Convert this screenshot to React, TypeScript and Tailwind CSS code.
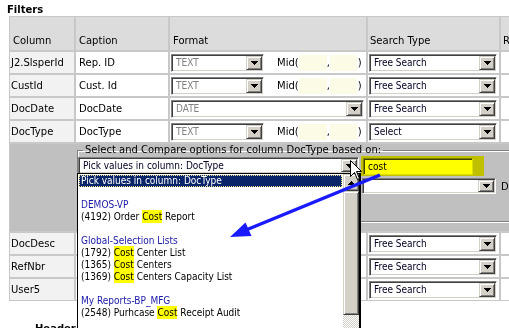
import React from 'react'

const V = "font-['DejaVu_Sans',Verdana,sans-serif] text-[10px]"
const T = "font-['DejaVu_Sans_Condensed','Liberation_Sans',Tahoma,sans-serif] text-[10px]"

type Row = { col: string; cap: string; fmt: string; mid: boolean; search: string }

const topRows: Row[] = [
    { col: 'J2.SlsperId', cap: 'Rep. ID', fmt: 'TEXT', mid: true, search: 'Free Search' },
    { col: 'CustId', cap: 'Cust. Id', fmt: 'TEXT', mid: true, search: 'Free Search' },
    { col: 'DocDate', cap: 'DocDate', fmt: 'DATE', mid: false, search: 'Free Search' },
    { col: 'DocType', cap: 'DocType', fmt: 'TEXT', mid: true, search: 'Select' },
]

const bottomRows: Row[] = [
    { col: 'DocDesc', cap: 'DocDesc', fmt: 'TEXT', mid: true, search: 'Free Search' },
    { col: 'RefNbr', cap: 'RefNbr', fmt: 'TEXT', mid: true, search: 'Free Search' },
    { col: 'User5', cap: 'User5', fmt: 'TEXT', mid: true, search: 'Free Search' },
]

type Item = { text?: string; selected?: boolean; group?: boolean; pre?: string; hl?: string; post?: string }

const items: Item[] = [
    { text: 'Pick values in column: DocType', selected: true },
    { text: '' },
    { text: 'DEMOS-VP', group: true },
    { pre: '(4192) Order ', hl: 'Cost', post: ' Report' },
    { text: '' },
    { text: 'Global-Selection Lists', group: true },
    { pre: '(1792) ', hl: 'Cost', post: ' Center List' },
    { pre: '(1365) ', hl: 'Cost', post: ' Centers' },
    { pre: '(1369) ', hl: 'Cost', post: ' Centers Capacity List' },
    { text: '' },
    { text: 'My Reports-BP_MFG', group: true },
    { pre: '(2548) Purhcase ', hl: 'Cost', post: ' Receipt Audit' },
    { text: '' },
]

function DownArrow() {
    return (
        <svg width="7" height="4" viewBox="0 0 7 4" shapeRendering="crispEdges">
            <path d="M0 0h7v1h-1v1h-1v1h-1v1h-1v-1h-1v-1h-1v-1h-1z" fill="#000" />
        </svg>
    )
}

function UpArrow() {
    return (
        <svg width="7" height="4" viewBox="0 0 7 4" shapeRendering="crispEdges">
            <path d="M3 0h1v1h1v1h1v1h1v1h-7v-1h1v-1h1v-1h1z" fill="#000" />
        </svg>
    )
}

function DropButton() {
    return (
        <div className="w-[16px] h-full shrink-0 bg-[#d4d0c8] border border-t-[#d4d0c8] border-l-[#d4d0c8] border-r-[#404040] border-b-[#404040] shadow-[inset_1px_1px_0_#fff,inset_-1px_-1px_0_#808080] flex items-center justify-center">
            <DownArrow />
        </div>
    )
}

function Select({ value = '', className = '', muted = false }: { value?: string; className?: string; muted?: boolean }) {
    return (
        <div className={`flex shrink-0 bg-white border border-t-[#808080] border-l-[#808080] border-r-white border-b-white shadow-[inset_1px_1px_0_#404040,inset_-1px_-1px_0_#d4d0c8] p-px ${className}`}>
            <div className={`flex-1 flex items-center pl-[3px] ${T} ${muted ? 'text-[#808080]' : 'text-[#000022]'}`}>{value}</div>
            <DropButton />
        </div>
    )
}

function MidBox({ className = '' }: { className?: string }) {
    return <div className={`h-[16px] bg-[#fbfbe6] ${className}`} />
}

function TableRow({ row }: { row: Row }) {
    return (
        <>
            <div className="h-[21px] bg-[#f2f2f2] px-px flex items-center">{row.col}</div>
            <div className="h-[21px] bg-white px-[3px] flex items-center">{row.cap}</div>
            <div className="h-[21px] bg-white pl-px flex items-center">
                <Select value={row.fmt} muted className={row.mid ? 'w-[93px] h-[18px]' : 'w-[193px] h-[18px]'} />
                {row.mid && (
                    <div className="flex items-center ml-[13px]">
                        <span>Mid(</span>
                        <MidBox className="w-[28px]" />
                        <span className="w-[3px]">,</span>
                        <MidBox className="w-[27px]" />
                        <span className="ml-px">)</span>
                    </div>
                )}
            </div>
            <div className="h-[21px] bg-white pl-px flex items-center">
                <Select value={row.search} className="w-[128px] h-[18px]" />
            </div>
            <div className="h-[21px] bg-white" />
        </>
    )
}

function PickList() {
    return (
        <div className="absolute left-[-1px] top-[16px] w-[284px] h-[170px] bg-white border border-black border-r-2 flex z-10">
            <div className={`flex-1 pt-px ${T}`}>
                {items.map((it, i) => {
                    if (it.selected) {
                        return (
                            <div key={i} className="mx-px h-[12px] leading-[12px] pl-[2px] bg-[#0a246a] text-white outline-1 outline-dotted outline-[#f0e68c] -outline-offset-1">
                                {it.text}
                            </div>
                        )
                    }
                    if (it.hl) {
                        return (
                            <div key={i} className="h-[12px] leading-[12px] pl-[3px] text-black whitespace-nowrap">
                                {it.pre}
                                <span className="bg-[#ffff00] py-px">{it.hl}</span>
                                {it.post}
                            </div>
                        )
                    }
                    return (
                        <div key={i} className={`h-[12px] leading-[12px] pl-[3px] whitespace-nowrap ${it.group ? 'text-[#1818a8]' : 'text-black'}`}>
                            {it.text}
                        </div>
                    )
                })}
            </div>
            <div className="w-[16px] flex flex-col">
                <div className="h-[17px] shrink-0 bg-[#d4d0c8] border border-t-[#d4d0c8] border-l-[#d4d0c8] border-r-[#404040] border-b-[#404040] shadow-[inset_1px_1px_0_#fff,inset_-1px_-1px_0_#808080] flex items-center justify-center">
                    <UpArrow />
                </div>
                <div className="h-[124px] shrink-0 bg-[#d4d0c8] border border-t-[#d4d0c8] border-l-[#d4d0c8] border-r-[#404040] border-b-[#404040] shadow-[inset_1px_1px_0_#fff,inset_-1px_-1px_0_#808080]" />
                <div className="flex-1 bg-[repeating-conic-gradient(#d4d0c8_0_25%,#ffffff_0_50%)] bg-[length:2px_2px]" />
            </div>
        </div>
    )
}

export default function App() {
    return (
        <div className={`relative w-[509px] h-[328px] overflow-hidden bg-white text-black pt-[4px] pl-[7px] ${V}`}>
            <div className="font-bold leading-[12px]">Filters</div>

            <div className="ml-[2px] w-max grid grid-cols-[64px_92px_196px_131px_40px] gap-[2px] bg-[#c8c8c8] p-px">
                <div className="h-[33px] bg-[#dcdcdc] px-[3px] pb-[2px] flex items-end">Column</div>
                <div className="h-[33px] bg-[#dcdcdc] px-[3px] pb-[2px] flex items-end">Caption</div>
                <div className="h-[33px] bg-[#dcdcdc] px-[3px] pb-[2px] flex items-end">Format</div>
                <div className="h-[33px] bg-[#dcdcdc] px-[2px] pb-[2px] flex items-end">Search Type</div>
                <div className="h-[33px] bg-[#dcdcdc] px-[2px] pb-[2px] flex items-end">R</div>

                {topRows.map((r) => (
                    <TableRow key={r.col} row={r} />
                ))}

                <div className="col-span-5 h-[87px] bg-[#c0c0c0] pl-[67px]">
                    <fieldset className="w-[460px] border border-[#808080] shadow-[1px_1px_0_#fff,inset_1px_1px_0_#fff] pb-[27px]">
                        <legend className="ml-[5px] px-[2px] leading-[12px]">Select and Compare options for column DocType based on:</legend>
                        <div className="flex items-start mt-px">
                            <div className="relative">
                                <Select value="Pick values in column: DocType" className="w-[281px] h-[17px]" />
                                <PickList />
                            </div>
                            <div className={`ml-[4px] mt-px w-[110px] h-[17px] bg-[#ffff00] border border-t-[#808080] border-l-[#808080] border-r-[#e0e0e0] border-b-[#e0e0e0] shadow-[inset_1px_1px_0_#404040] pl-[4px] flex items-center ${T}`}>
                                cost
                            </div>
                        </div>
                        <div className="flex items-center mt-[3px] pl-[284px]">
                            <Select className="w-[134px] h-[16px]" />
                            <span className="ml-[5px]">Default</span>
                        </div>
                    </fieldset>
                </div>

                {bottomRows.map((r) => (
                    <TableRow key={r.col} row={r} />
                ))}
            </div>

            <div className="mt-[22px] pl-[28px] font-bold leading-[12px]">Header Links</div>

            {/* yellow marker over the search box */}
            <div className="absolute left-[361px] top-[156px] w-[123px] h-[20px] bg-[#ffff00] mix-blend-multiply z-20 pointer-events-none" />

            {/* annotation arrow */}
            <svg className="absolute left-0 top-0 z-30 pointer-events-none" width="509" height="328" viewBox="0 0 509 328">
                <line x1="380" y1="175" x2="246" y2="230" stroke="#1a1aff" strokeWidth="3.5" />
                <polygon points="230,237 245.5,222.5 251.5,236" fill="#1a1aff" />
            </svg>

            {/* mouse pointer */}
            <svg className="absolute left-[350px] top-[160px] z-40 pointer-events-none" width="13" height="21" viewBox="0 0 13 21">
                <path d="M0.5 0.5V16.5L4.5 12.5L7.5 19.5L9.5 18.5L6.5 11.5H11.5Z" fill="#fff" stroke="#000" strokeWidth="1" strokeLinejoin="miter" />
            </svg>
        </div>
    )
}
